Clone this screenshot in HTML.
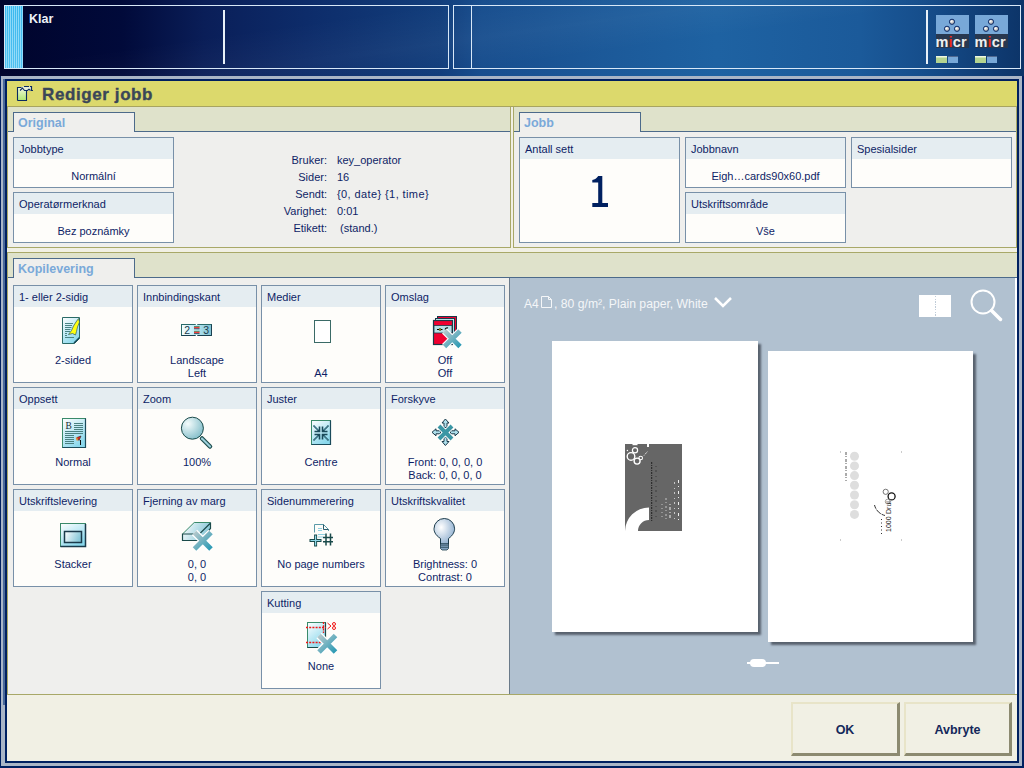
<!DOCTYPE html>
<html><head><meta charset="utf-8">
<style>
*{margin:0;padding:0;box-sizing:border-box}
html,body{width:1024px;height:768px;overflow:hidden;background:#002060;font-family:"Liberation Sans",sans-serif}
.a{position:absolute}
#hdr{left:0;top:0;width:1024px;height:76px;background:linear-gradient(172deg,rgba(255,255,255,0) 30%,rgba(255,255,255,.035) 48%,rgba(255,255,255,0) 62%),linear-gradient(90deg,#00042c 0%,#010a3a 12%,#0a1e58 20%,#0d2c6a 30%,#123e7c 43%,#184e8e 47%,#1c5a9a 60%,#1e62a2 70%,#1b5a9a 84%,#164e8c 90%,#103e76 96%,#0c3468 100%)}
.hb{border:1px solid #d8e8f8}
.vl{background:#e8f0f8}
#frame{left:0;top:76px;width:1024px;height:692px;background:#002060}
.card{position:absolute;border:1px solid #7890a8;background:#fefdfa;color:#0e1e66;font-size:11px}
.card .h{height:21px;background:#e5edf1;padding:5px 0 0 5px;white-space:nowrap}
.card .v{position:absolute;left:0;right:0;text-align:center;white-space:nowrap}
.tab{position:absolute;border:1px solid #4c6a8a;border-bottom:none;background:#efefed;color:#7aa9d9;font-weight:bold;font-size:12.5px;padding:3px 0 0 4px}
.olive{background:#a8a868}
.btn{background:#f1f0e4;border-top:2px solid #e8e4c8;border-left:2px solid #e8e4c8;border-right:3px solid #8c8a70;border-bottom:3px solid #8c8a70;color:#14285a;font-weight:bold;font-size:12.5px;text-align:center;line-height:52px}
</style></head><body>
<!-- header -->
<div id="hdr" class="a">
  <div class="a hb" style="left:4px;top:5px;width:445px;height:64px"></div>
  <div class="a" style="left:5px;top:6px;width:18px;height:62px;background:repeating-linear-gradient(90deg,#3ab8ee 0px,#3ab8ee 1px,#8ad8f8 1px,#8ad8f8 2px)"></div>
  <div class="a vl" style="left:5px;top:6px;width:18px;height:62px;background:linear-gradient(180deg,rgba(255,255,255,0) 0%,rgba(255,255,255,.1) 100%)"></div>
  <div class="a" style="left:29px;top:12px;color:#eef2f8;font-weight:bold;font-size:12.5px">Klar</div>
  <div class="a vl" style="left:223px;top:10px;width:2px;height:54px"></div>
  <div class="a hb" style="left:453px;top:5px;width:568px;height:64px"></div>
  <div class="a vl" style="left:471px;top:6px;width:1px;height:62px;background:#d8e8f8"></div>
  <div class="a vl" style="left:926px;top:10px;width:2px;height:54px"></div>
</div>
<!-- dialog frame -->
<div id="frame" class="a">
  <div class="a" style="left:1px;top:0;width:1021px;height:690px;background:#a9b5c6"></div>
  <div class="a" style="left:3px;top:3px;width:2px;height:626px;background:#4a6a9a"></div>
  <div class="a" style="left:5px;top:3px;width:1014px;height:684px;background:#002060"></div>
</div>
<!-- content -->
<div class="a" style="left:7px;top:81px;width:1010px;height:680px;background:#f1f0e4">
  <!-- title -->
  <div class="a" style="left:0;top:0;width:1010px;height:26px;background:#dcd96c;border-bottom:1px solid #a8a460"></div>
  <div class="a" style="left:35px;top:4px;font-size:17px;letter-spacing:.6px;font-weight:bold;color:#3a4658;-webkit-text-stroke:.35px #3a4658">Rediger jobb</div>
  <!-- top section -->
  <div class="a" style="left:0;top:26px;width:1010px;height:145px;background:#f1f0e4"></div>
  <!-- Original panel -->
  <div class="a" style="left:0;top:26px;width:504px;height:141px;background:#efefed;border:1px solid #a8a868;border-top:none"></div>
  <div class="a" style="left:1px;top:26px;width:502px;height:25px;background:#dfe2cb;border-bottom:1px solid #4c6a8a"></div>
  <!-- Jobb panel -->
  <div class="a" style="left:506px;top:26px;width:504px;height:141px;background:#efefed;border:1px solid #a8a868;border-top:none"></div>
  <div class="a" style="left:507px;top:26px;width:502px;height:25px;background:#dfe2cb;border-bottom:1px solid #4c6a8a"></div>
  <!-- Kopilevering section -->
  <div class="a" style="left:0;top:171px;width:1010px;height:443px;background:#efefed;border-top:1px solid #a8a868;border-bottom:1px solid #a8a868;border-left:1px solid #a8a868"></div>
  <div class="a" style="left:1px;top:172px;width:1009px;height:25px;background:#dfe2cb;border-bottom:1px solid #4c6a8a"></div>
  <div class="a" style="left:502px;top:197px;width:508px;height:416px;background:#b1c1d0;border-left:1px solid #6a7a8a;border-right:2px solid #fff"></div>
</div>
<div class="a tab" style="left:13px;top:112px;width:122px;height:20px">Original</div>
<div class="a tab" style="left:519px;top:112px;width:122px;height:20px">Jobb</div>
<div class="a tab" style="left:13px;top:258px;width:122px;height:20px">Kopilevering</div>

<!-- Original cards -->
<div class="card" style="left:13px;top:137px;width:161px;height:51px"><div class="h">Jobbtype</div><div class="v" style="top:32px">Normální</div></div>
<div class="card" style="left:13px;top:192px;width:161px;height:51px"><div class="h">Operatørmerknad</div><div class="v" style="top:32px">Bez poznámky</div></div>

<!-- Jobb cards -->
<div class="card" style="left:519px;top:137px;width:161px;height:106px"><div class="h">Antall sett</div></div>
<div class="card" style="left:685px;top:137px;width:161px;height:51px"><div class="h">Jobbnavn</div><div class="v" style="top:32px">Eigh…cards90x60.pdf</div></div>
<div class="card" style="left:685px;top:192px;width:161px;height:51px"><div class="h">Utskriftsområde</div><div class="v" style="top:32px">Vše</div></div>
<div class="card" style="left:851px;top:137px;width:161px;height:51px"><div class="h">Spesialsider</div></div>

<!-- Kopilevering cards -->
<div class="card" style="left:13px;top:285px;width:120px;height:98px"><div class="h">1- eller 2-sidig</div><div class="v" style="top:68px">2-sided</div></div>
<div class="card" style="left:137px;top:285px;width:120px;height:98px"><div class="h">Innbindingskant</div><div class="v" style="top:68px;line-height:13px">Landscape<br>Left</div></div>
<div class="card" style="left:261px;top:285px;width:120px;height:98px"><div class="h">Medier</div><div class="v" style="top:81px">A4</div></div>
<div class="card" style="left:385px;top:285px;width:120px;height:98px"><div class="h">Omslag</div><div class="v" style="top:68px;line-height:13px">Off<br>Off</div></div>

<div class="card" style="left:13px;top:387px;width:120px;height:98px"><div class="h">Oppsett</div><div class="v" style="top:68px">Normal</div></div>
<div class="card" style="left:137px;top:387px;width:120px;height:98px"><div class="h">Zoom</div><div class="v" style="top:68px">100%</div></div>
<div class="card" style="left:261px;top:387px;width:120px;height:98px"><div class="h">Juster</div><div class="v" style="top:68px">Centre</div></div>
<div class="card" style="left:385px;top:387px;width:120px;height:98px"><div class="h">Forskyve</div><div class="v" style="top:68px;line-height:13px">Front: 0, 0, 0, 0<br>Back: 0, 0, 0, 0</div></div>

<div class="card" style="left:13px;top:489px;width:120px;height:98px"><div class="h">Utskriftslevering</div><div class="v" style="top:68px">Stacker</div></div>
<div class="card" style="left:137px;top:489px;width:120px;height:98px"><div class="h">Fjerning av marg</div><div class="v" style="top:68px;line-height:13px">0, 0<br>0, 0</div></div>
<div class="card" style="left:261px;top:489px;width:120px;height:98px"><div class="h">Sidenummerering</div><div class="v" style="top:68px">No page numbers</div></div>
<div class="card" style="left:385px;top:489px;width:120px;height:98px"><div class="h">Utskriftskvalitet</div><div class="v" style="top:68px;line-height:13px">Brightness: 0<br>Contrast: 0</div></div>

<div class="card" style="left:261px;top:591px;width:120px;height:98px"><div class="h">Kutting</div><div class="v" style="top:68px">None</div></div>


<!-- Original info -->
<div class="a" style="left:230px;top:152px;width:97px;text-align:right;font-size:11px;line-height:17px;color:#0e1e66">Bruker:<br>Sider:<br>Sendt:<br>Varighet:<br>Etikett:</div>
<div class="a" style="left:337px;top:152px;font-size:11px;line-height:17px;color:#0e1e66;white-space:nowrap">key_operator<br>16<br><span style="letter-spacing:.4px">{0, date} {1, time}</span><br>0:01<br>&nbsp;(stand.)</div>

<!-- preview bar -->
<div class="a" style="left:524px;top:297px;font-size:12px;color:#f4f6f8;white-space:nowrap">A4</div>
<svg class="a" style="left:540px;top:295px" width="14" height="14" viewBox="0 0 14 14"><path d="M1.5 1.5h7l3 3v8h-10z M8.5 1.5v3h3" fill="none" stroke="#f4f6f8" stroke-width="1"/></svg>
<div class="a" style="left:554px;top:297px;font-size:12.2px;color:#f4f6f8;white-space:nowrap">, 80 g/m², Plain paper, White</div>
<svg class="a" style="left:712px;top:295px" width="22" height="14" viewBox="0 0 22 14"><path d="M3 3l8 8l8-8" fill="none" stroke="#fff" stroke-width="2.5"/></svg>
<div class="a" style="left:919px;top:295px;width:32px;height:22px;background:#fff"></div>
<div class="a" style="left:934.5px;top:296px;width:1.2px;height:20px;background:repeating-linear-gradient(180deg,#c0ccd8 0px,#c0ccd8 1.4px,transparent 1.4px,transparent 2.6px)"></div>
<svg class="a" style="left:965px;top:285px" width="40" height="40" viewBox="0 0 40 40"><circle cx="18" cy="17" r="11.5" fill="none" stroke="#fff" stroke-width="2"/><path d="M26.5 25.5l9 9" stroke="#fff" stroke-width="3.5" stroke-linecap="round"/></svg>

<!-- pages -->
<div class="a" style="left:552px;top:341px;width:206px;height:291px;background:#fff;box-shadow:3px 3px 2px #58626e"></div>
<div class="a" style="left:768px;top:351px;width:205px;height:291px;background:#fff;box-shadow:3px 3px 2px #58626e"></div>
<svg class="a" style="left:625px;top:444px" width="57" height="87" viewBox="0 0 57 87">
<defs><clipPath id="cc"><rect x="0" y="0" width="57" height="87"/></clipPath></defs>
<rect x="0" y="0" width="57" height="87" fill="#666666"/>
<g clip-path="url(#cc)">
<rect x="7.5" y="0" width="5" height="1.2" fill="#fff"/>
<rect x="22" y="0" width="2" height="3" fill="#fff"/>
<circle cx="6" cy="12.4" r="3.8" fill="none" stroke="#fff" stroke-width="1.4"/>
<circle cx="10" cy="6.2" r="2.6" fill="none" stroke="#fff" stroke-width="1.2"/>
<circle cx="12.1" cy="17.1" r="3" fill="none" stroke="#fff" stroke-width="1.4"/>
<circle cx="15.7" cy="14" r="1.8" fill="none" stroke="#fff" stroke-width="1.1"/>
<path d="M19 11.5L22.5 7.5" stroke="#fff" stroke-width="1" stroke-dasharray="1 1"/>
<circle cx="2.4" cy="6.5" r="0.7" fill="#fff"/>
<path d="M0 87A24 24 0 0 1 24 63.5V76A11 11 0 0 0 13 87Z" fill="#fff"/>
</g>
<path d="M26.7 18V77" stroke="#222" stroke-width="1" stroke-dasharray="2 1 1 1"/>
<path d="M31 22V76" stroke="#333" stroke-width="0.8" stroke-dasharray="1 3 2 4"/>
<path d="M37 60V76" stroke="#ddd" stroke-width="0.8" stroke-dasharray="1 3"/>
<path d="M41 54V76" stroke="#ddd" stroke-width="0.8" stroke-dasharray="2 2 1 3"/>
<path d="M45 60V76" stroke="#eee" stroke-width="1" stroke-dasharray="1 2 3 2"/>
<path d="M49.5 38V76" stroke="#ddd" stroke-width="0.8" stroke-dasharray="2 4 1 3"/>
<path d="M53.5 36V76" stroke="#eee" stroke-width="1" stroke-dasharray="3 3 1 4"/>
</svg>
<svg class="a" style="left:838px;top:450px" width="66" height="92" viewBox="0 0 66 92">
<g fill="#dedede">
<circle cx="16.5" cy="6.2" r="4.5"/><circle cx="16.5" cy="15.9" r="4.5"/><circle cx="16.5" cy="25.6" r="4.5"/><circle cx="16.5" cy="35.3" r="4.5"/><circle cx="16.5" cy="45.0" r="4.5"/><circle cx="16.5" cy="54.7" r="4.5"/><circle cx="16.5" cy="64.4" r="4.5"/>
</g>
<path d="M8 2V31" stroke="#444" stroke-width="0.9" stroke-dasharray="3 1 1 2"/>
<circle cx="47.7" cy="41.8" r="2.6" fill="none" stroke="#666" stroke-width="0.9"/>
<circle cx="53.6" cy="46.4" r="3.5" fill="none" stroke="#111" stroke-width="1.3"/>
<circle cx="49.7" cy="51.6" r="2.4" fill="none" stroke="#888" stroke-width="0.8"/>
<path d="M36.5 55A14 14 0 0 0 47 65.5" fill="none" stroke="#333" stroke-width="1" stroke-dasharray="4 1 6 1"/>
<text transform="translate(52.5,64) rotate(-90)" font-family="Liberation Sans" font-size="7" fill="#333">Drul</text>
<text transform="translate(52.5,82) rotate(-90)" font-family="Liberation Sans" font-size="7" fill="#111">1000</text>
<path d="M43.5 69V86" stroke="#333" stroke-width="1" stroke-dasharray="1 2.5"/>
<g fill="#999"><rect x="2" y="1.5" width="1" height="1"/><rect x="63" y="1.5" width="1" height="1"/><rect x="2" y="89.5" width="1" height="1"/><rect x="63" y="89.5" width="1" height="1"/></g>
</svg>

<!-- slider -->
<div class="a" style="left:747px;top:662px;width:32px;height:2px;background:#fff"></div>
<div class="a" style="left:750px;top:659px;width:16px;height:8px;background:#fff;border-radius:4px"></div>

<!-- buttons -->
<div class="a btn" style="left:791px;top:702px;width:109px;height:54px">OK</div>
<div class="a btn" style="left:904px;top:702px;width:108px;height:54px">Avbryte</div>

<svg class="a" style="left:590px;top:174px" width="20" height="35" viewBox="0 0 20 35"><path d="M8.2 2H12.3V29.1H18V32.9H2.3V29.1H8.2V8.6H2.3V6Q6 5.5 8.2 2Z" fill="#002060"/></svg>
<!-- defs -->
<svg width="0" height="0" style="position:absolute">
<defs>
<linearGradient id="gPg" x1="0" y1="0" x2="0.6" y2="1"><stop offset="0" stop-color="#ffffff"/><stop offset="1" stop-color="#8ad8ec"/></linearGradient>
<linearGradient id="gPgH" x1="0" y1="0" x2="1" y2="0.3"><stop offset="0" stop-color="#ffffff"/><stop offset="1" stop-color="#88c8d8"/></linearGradient>
<linearGradient id="gX" x1="0" y1="0" x2="1" y2="1"><stop offset="0" stop-color="#b4c8cc"/><stop offset="1" stop-color="#2a9ab4"/></linearGradient>
<linearGradient id="gGr" x1="0" y1="0" x2="0" y2="1"><stop offset="0" stop-color="#f4f8dc"/><stop offset="1" stop-color="#b0e870"/></linearGradient>
<radialGradient id="gBulb" cx="0.35" cy="0.35" r="0.7"><stop offset="0" stop-color="#ffffff"/><stop offset="1" stop-color="#90b0d0"/></radialGradient>
<radialGradient id="gLens" cx="0.3" cy="0.3" r="0.8"><stop offset="0" stop-color="#f4fcfc"/><stop offset="1" stop-color="#80bcc8"/></radialGradient>
<radialGradient id="gBall" cx="0.4" cy="0.4" r="0.6"><stop offset="0" stop-color="#ffffff"/><stop offset="1" stop-color="#a0a0a0"/></radialGradient>
</defs></svg>

<!-- title icon -->
<svg class="a" style="left:14px;top:83px" width="24" height="21" viewBox="0 0 24 21">
<rect x="3.5" y="4.5" width="9" height="13" fill="url(#gGr)"/>
<path d="M3.5 17.5V4.5H8.5M12.5 7.5V17.5H3.5" fill="none" stroke="#0a2a60" stroke-width="1.1"/>
<path d="M8 3.5H17.5V7.5H6Z" fill="#e4ecd8"/>
<path d="M10 3.5H15M16 3.5H17.5V7.5H19" fill="none" stroke="#0a2a60" stroke-width="1.2"/>
<path d="M6 7.5L8.5 5L10.5 7.5H13.5L15 6.2L16.5 7.5" fill="none" stroke="#0a2a60" stroke-width="1.1"/>
</svg>

<!-- micr icons -->
<svg class="a" style="left:936px;top:15px" width="34" height="49" viewBox="0 0 34 49">
<rect x="0" y="0" width="33" height="19" fill="#78a8d8"/>
<rect x="0" y="19" width="33" height="14" fill="#283850"/>
<circle cx="16" cy="6.8" r="2.6" fill="url(#gBall)" stroke="#0a2a6a" stroke-width="1"/>
<circle cx="11" cy="13.8" r="2.6" fill="url(#gBall)" stroke="#0a2a6a" stroke-width="1"/>
<circle cx="21" cy="13.8" r="2.6" fill="url(#gBall)" stroke="#0a2a6a" stroke-width="1"/>
<text y="31.5" font-family="Liberation Sans" font-weight="bold" font-size="14.5" fill="#eef0f0" letter-spacing="0.2" x="-0.5">m<tspan fill="#e82818">i</tspan>cr</text>
<rect x="0" y="41" width="11" height="7" fill="#b4d490"/><rect x="0" y="41" width="11" height="1.5" fill="#f0f8e0"/>
<rect x="12" y="41" width="10" height="7" fill="#78a8d8"/><rect x="12" y="41" width="10" height="1" fill="#506890"/>
</svg>
<svg class="a" style="left:975px;top:15px" width="34" height="49" viewBox="0 0 34 49">
<rect x="0" y="0" width="33" height="19" fill="#78a8d8"/>
<rect x="0" y="19" width="33" height="14" fill="#283850"/>
<circle cx="16" cy="6.8" r="2.6" fill="url(#gBall)" stroke="#0a2a6a" stroke-width="1"/>
<circle cx="11" cy="13.8" r="2.6" fill="url(#gBall)" stroke="#0a2a6a" stroke-width="1"/>
<circle cx="21" cy="13.8" r="2.6" fill="url(#gBall)" stroke="#0a2a6a" stroke-width="1"/>
<text y="31.5" font-family="Liberation Sans" font-weight="bold" font-size="14.5" fill="#eef0f0" letter-spacing="0.2" x="-0.5">m<tspan fill="#e82818">i</tspan>cr</text>
<rect x="0" y="41" width="11" height="7" fill="#b4d490"/><rect x="0" y="41" width="11" height="1.5" fill="#f0f8e0"/>
<rect x="12" y="41" width="10" height="7" fill="#78a8d8"/><rect x="12" y="41" width="10" height="1" fill="#506890"/>
</svg>

<!-- 1: 2-sided -->
<svg class="a" style="left:52px;top:310px" width="40" height="40" viewBox="0 0 40 40">
<path d="M10.5 7.5H27.5V28.5L22.5 33.5H10.5Z" fill="url(#gPg)" stroke="#2a6a66" stroke-width="1"/>
<path d="M13 13.5h8M13 15.5h7M13 17.5h6.5M13 19.5h5.5M13 21.5h5M13 23.5h2M13 25.5h2M13 27.5h9" stroke="#4a8484" stroke-width="1"/>
<path d="M26.5 8.5L27.5 12L25.5 17L24.5 21.5L23.5 25L20.5 23.5L16.5 24.5L19.5 20.5L21.5 16L24 12Z" fill="#ffff10" stroke="#2a5a66" stroke-width="0.7"/>
<path d="M27.5 27.5L22 33" stroke="#1a4a5a" stroke-width="1.5"/>
</svg>
<!-- 2: binding -->
<svg class="a" style="left:176px;top:315px" width="40" height="30" viewBox="0 0 40 30">
<defs><linearGradient id="gBd" x1="0" y1="0" x2="1" y2="0"><stop offset="0" stop-color="#f8ffff"/><stop offset="0.5" stop-color="#b8e8f4"/><stop offset="1" stop-color="#80c0d0"/></linearGradient></defs>
<rect x="5.5" y="9.5" width="30" height="11" fill="url(#gBd)" stroke="#2a6a6a" stroke-width="1"/>
<path d="M5.5 20.5h30v-11" fill="none" stroke="#1a4050" stroke-width="1"/>
<path d="M20.5 9v1M20.5 20v1.5" stroke="#ffffff" stroke-width="1.5"/>
<text x="8.2" y="19" font-family="Liberation Sans" font-size="10.5" fill="#1a3a4a">2</text>
<text x="27.2" y="19" font-family="Liberation Sans" font-size="10.5" fill="#1a3a4a">3</text>
<rect x="18" y="11.5" width="5.5" height="2" fill="#f04040"/><path d="M18 11.5h5.5" stroke="#3a8a5a" stroke-width="0.8"/><path d="M18 13.8h5.5" stroke="#1a3a4a" stroke-width="0.8"/>
<rect x="18" y="16.3" width="5.5" height="2" fill="#f04040"/><path d="M18 16.3h5.5" stroke="#3a8a5a" stroke-width="0.8"/><path d="M18 18.6h5.5" stroke="#1a3a4a" stroke-width="0.8"/>
</svg>
<!-- 3: medier -->
<div class="a" style="left:314px;top:320px;width:17px;height:23px;border:1px solid #3a6a66;background:#fff"></div>
<!-- 4: omslag -->
<svg class="a" style="left:425px;top:310px" width="40" height="40" viewBox="0 0 40 40">
<rect x="12.5" y="6.5" width="19" height="20" fill="#f00030" stroke="#1a3a4a" stroke-width="1"/>
<rect x="10.5" y="8.5" width="19" height="20" fill="#c8f0f8" stroke="#1a3a4a" stroke-width="1"/>
<rect x="8.5" y="10.5" width="19" height="24" fill="#f00030" stroke="#1a3a4a" stroke-width="1.2"/>
<rect x="9" y="15.5" width="18" height="7.5" fill="#b8e0e8" stroke="#1a3a4a" stroke-width="0.8"/>
<path d="M12 19.5h5.5M20 19.5q1-2 3-1.5" fill="none" stroke="#000" stroke-width="1.2"/><circle cx="15" cy="19.5" r="1" fill="#f8e800" stroke="#000" stroke-width="0.6"/>
<path d="M19.5 21L35 36.5M35 21L19.5 36.5" stroke="#ffffff" stroke-width="7"/>
<path d="M19.5 21L35 36.5M35 21L19.5 36.5" stroke="url(#gX)" stroke-width="4.8"/>
</svg>
<!-- 5: oppsett -->
<svg class="a" style="left:52px;top:412px" width="40" height="40" viewBox="0 0 40 40">
<rect x="10.5" y="6.5" width="23" height="29" fill="url(#gPg)" stroke="#3a8a6a" stroke-width="1"/>
<path d="M33.5 6.5V35.5H10.5" fill="none" stroke="#1a4a5a" stroke-width="1.2"/>
<text x="13.5" y="17" font-family="Liberation Serif" font-size="9.5" fill="#202a30">B</text>
<path d="M22 11.5h9M22 13.5h9M22 15.5h9M22 17.5h9M13 19.5h18M13 21.5h18M13 23.5h9M13 25.5h9M13 27.5h9M13 29.5h9M13 31.5h9" stroke="#4a8080" stroke-width="1"/>
<path d="M25 25.5l4-1.5l-2 4.5z" fill="#f02020" stroke="#222" stroke-width="0.6"/><path d="M24.5 25.5l1 3" stroke="#f08020" stroke-width="1.5"/><path d="M28.5 28v5" stroke="#111" stroke-width="1"/>
</svg>
<!-- 6: zoom -->
<svg class="a" style="left:176px;top:412px" width="40" height="40" viewBox="0 0 40 40">
<path d="M26 26.5L34 34.5" stroke="#1a4a4a" stroke-width="4.5" stroke-linecap="round"/>
<path d="M26 26.5L34 34.5" stroke="#9cd0dc" stroke-width="2.2" stroke-linecap="round"/>
<circle cx="16.4" cy="16.2" r="11" fill="url(#gLens)" stroke="#1a4a4a" stroke-width="1"/>
</svg>
<!-- 7: juster -->
<svg class="a" style="left:300px;top:412px" width="40" height="40" viewBox="0 0 40 40">
<rect x="11.5" y="8.5" width="19" height="24" fill="url(#gPg)" stroke="#3a8a6a" stroke-width="1"/>
<path d="M30.5 8.5V32.5H11.5" fill="none" stroke="#1a4a5a" stroke-width="1.2"/>
<g stroke="#1a4a5a" stroke-width="1.6" fill="none">
<path d="M13.5 13.5L19 19M19.5 14.5V19.5H14.5"/>
<path d="M28.5 13.5L23 19M22.5 14.5V19.5H27.5"/>
<path d="M13.5 28.5L19 23M19.5 27.5V22.5H14.5"/>
<path d="M28.5 28.5L23 23M22.5 27.5V22.5H27.5"/>
</g>
<g stroke="#80c8d8" stroke-width="0.7" fill="none">
<path d="M14 13.5L18.5 18M28 13.5L23.5 18M14 28.5L18.5 24M28 28.5L23.5 24"/>
</g>
</svg>
<!-- 8: forskyve -->
<svg class="a" style="left:425px;top:412px" width="40" height="40" viewBox="0 0 40 40">
<g fill="#b0e0ec" stroke="#1a3a4a" stroke-width="1">
<path d="M20.4 7L24 11H22V15.5H19V11H17Z"/>
<path d="M20.4 33.5L24 29.5H22V25H19V29.5H17Z"/>
<path d="M7 20.3L11 16.8V18.8H15.5V21.8H11V23.8Z"/>
<path d="M34 20.3L30 16.8V18.8H25.5V21.8H30V23.8Z"/>
</g>
<path d="M14 14L27 27M27 14L14 27" stroke="#ffffff" stroke-width="6"/>
<path d="M14 14L27 27M27 14L14 27" stroke="#3a96a4" stroke-width="4"/>
</svg>
<!-- 9: stacker -->
<svg class="a" style="left:52px;top:514px" width="40" height="40" viewBox="0 0 40 40">
<rect x="8.5" y="9.5" width="25" height="23" fill="url(#gPg)" stroke="#3a8a6a" stroke-width="1"/>
<path d="M33.5 10V32.5H8.5" fill="none" stroke="#1a3a4a" stroke-width="1.5"/>
<rect x="12.5" y="17.5" width="17" height="11" fill="url(#gPgH)" stroke="#1a3a4a" stroke-width="1.5"/>
</svg>
<!-- 10: fjerning -->
<svg class="a" style="left:176px;top:514px" width="40" height="40" viewBox="0 0 40 40">
<path d="M6.5 20L18.2 8.5H34.5V14.5L23.5 26.5H6.5Z" fill="url(#gPgH)"/>
<path d="M6.5 20L18.2 8.5H34.5" fill="none" stroke="#3a8a6a" stroke-width="1"/>
<path d="M34.5 8.5V14.5L23.5 26.5H6.5V20H23.5L34 9.5" fill="none" stroke="#1a4a4a" stroke-width="1.2"/>
<path d="M18.5 18.5L35 35M35 18.5L18.5 35" stroke="#ffffff" stroke-width="7.5"/>
<path d="M18.5 18.5L35 35M35 18.5L18.5 35" stroke="url(#gX)" stroke-width="5"/>
</svg>
<!-- 11: sidenummerering -->
<svg class="a" style="left:300px;top:514px" width="40" height="40" viewBox="0 0 40 40">
<path d="M14.5 18.5V10.5H23.5L28.5 15.5V17" fill="none" stroke="#5a9aa8" stroke-width="1"/>
<path d="M23.5 10.5V15.5H28.5" fill="none" stroke="#2a5a6a" stroke-width="1"/>
<path d="M18 14.5h4M18 16.5h4M18 20.5h7M18 23h5" stroke="#90d0e0" stroke-width="1.2"/>
<path d="M9.5 26.5H21.5M15.6 20.5V32.5" stroke="#1a4a4a" stroke-width="3"/>
<path d="M10.5 26.5H20.5M15.6 21.5V31.5" stroke="#90d8e8" stroke-width="1.2"/>
<path d="M26 19.5V31.5M30.5 19.5V31.5M23 23.5H33M23 27.8H33" stroke="#1a4a4a" stroke-width="1.5"/>
</svg>
<!-- 12: bulb -->
<svg class="a" style="left:425px;top:514px" width="40" height="40" viewBox="0 0 40 40">
<path d="M15.5 30V24.5C10 21 9 17 9 14.8A10.3 10.3 0 0 1 29.6 14.8C29.6 17 28.6 21 23.5 24.5V30Z" fill="url(#gBulb)" stroke="#1a3a4a" stroke-width="1"/>
<path d="M15.5 30H23.5V34.5L22 36H17L15.5 34.5Z" fill="#8aaac8" stroke="#1a3a4a" stroke-width="0.8"/>
<path d="M15.5 31.8h8M15.5 33.6h8" stroke="#2a4a5a" stroke-width="0.8"/>
</svg>
<!-- 13: kutting -->
<svg class="a" style="left:300px;top:616px" width="40" height="40" viewBox="0 0 40 40">
<rect x="7.5" y="6.5" width="18" height="25" fill="url(#gPg)" stroke="#3a8a6a" stroke-width="1"/>
<path d="M25.5 6.5V31.5H7.5" fill="none" stroke="#1a4a4a" stroke-width="1.2"/>
<path d="M6 11.5H26M6 26.5H21M23.5 6V17" stroke="#f01818" stroke-width="1.3" stroke-dasharray="2 1.2"/>
<path d="M27.5 7L31 10L27.5 13" fill="none" stroke="#f01818" stroke-width="1"/>
<circle cx="34" cy="8" r="1.5" fill="none" stroke="#f01818" stroke-width="1"/><circle cx="34" cy="12" r="1.5" fill="none" stroke="#f01818" stroke-width="1"/>
<path d="M19 19.5L35.5 36M35.5 19.5L19 36" stroke="#ffffff" stroke-width="7.5"/>
<path d="M19 19.5L35.5 36M35.5 19.5L19 36" stroke="url(#gX)" stroke-width="5"/>
</svg>
</body></html>
